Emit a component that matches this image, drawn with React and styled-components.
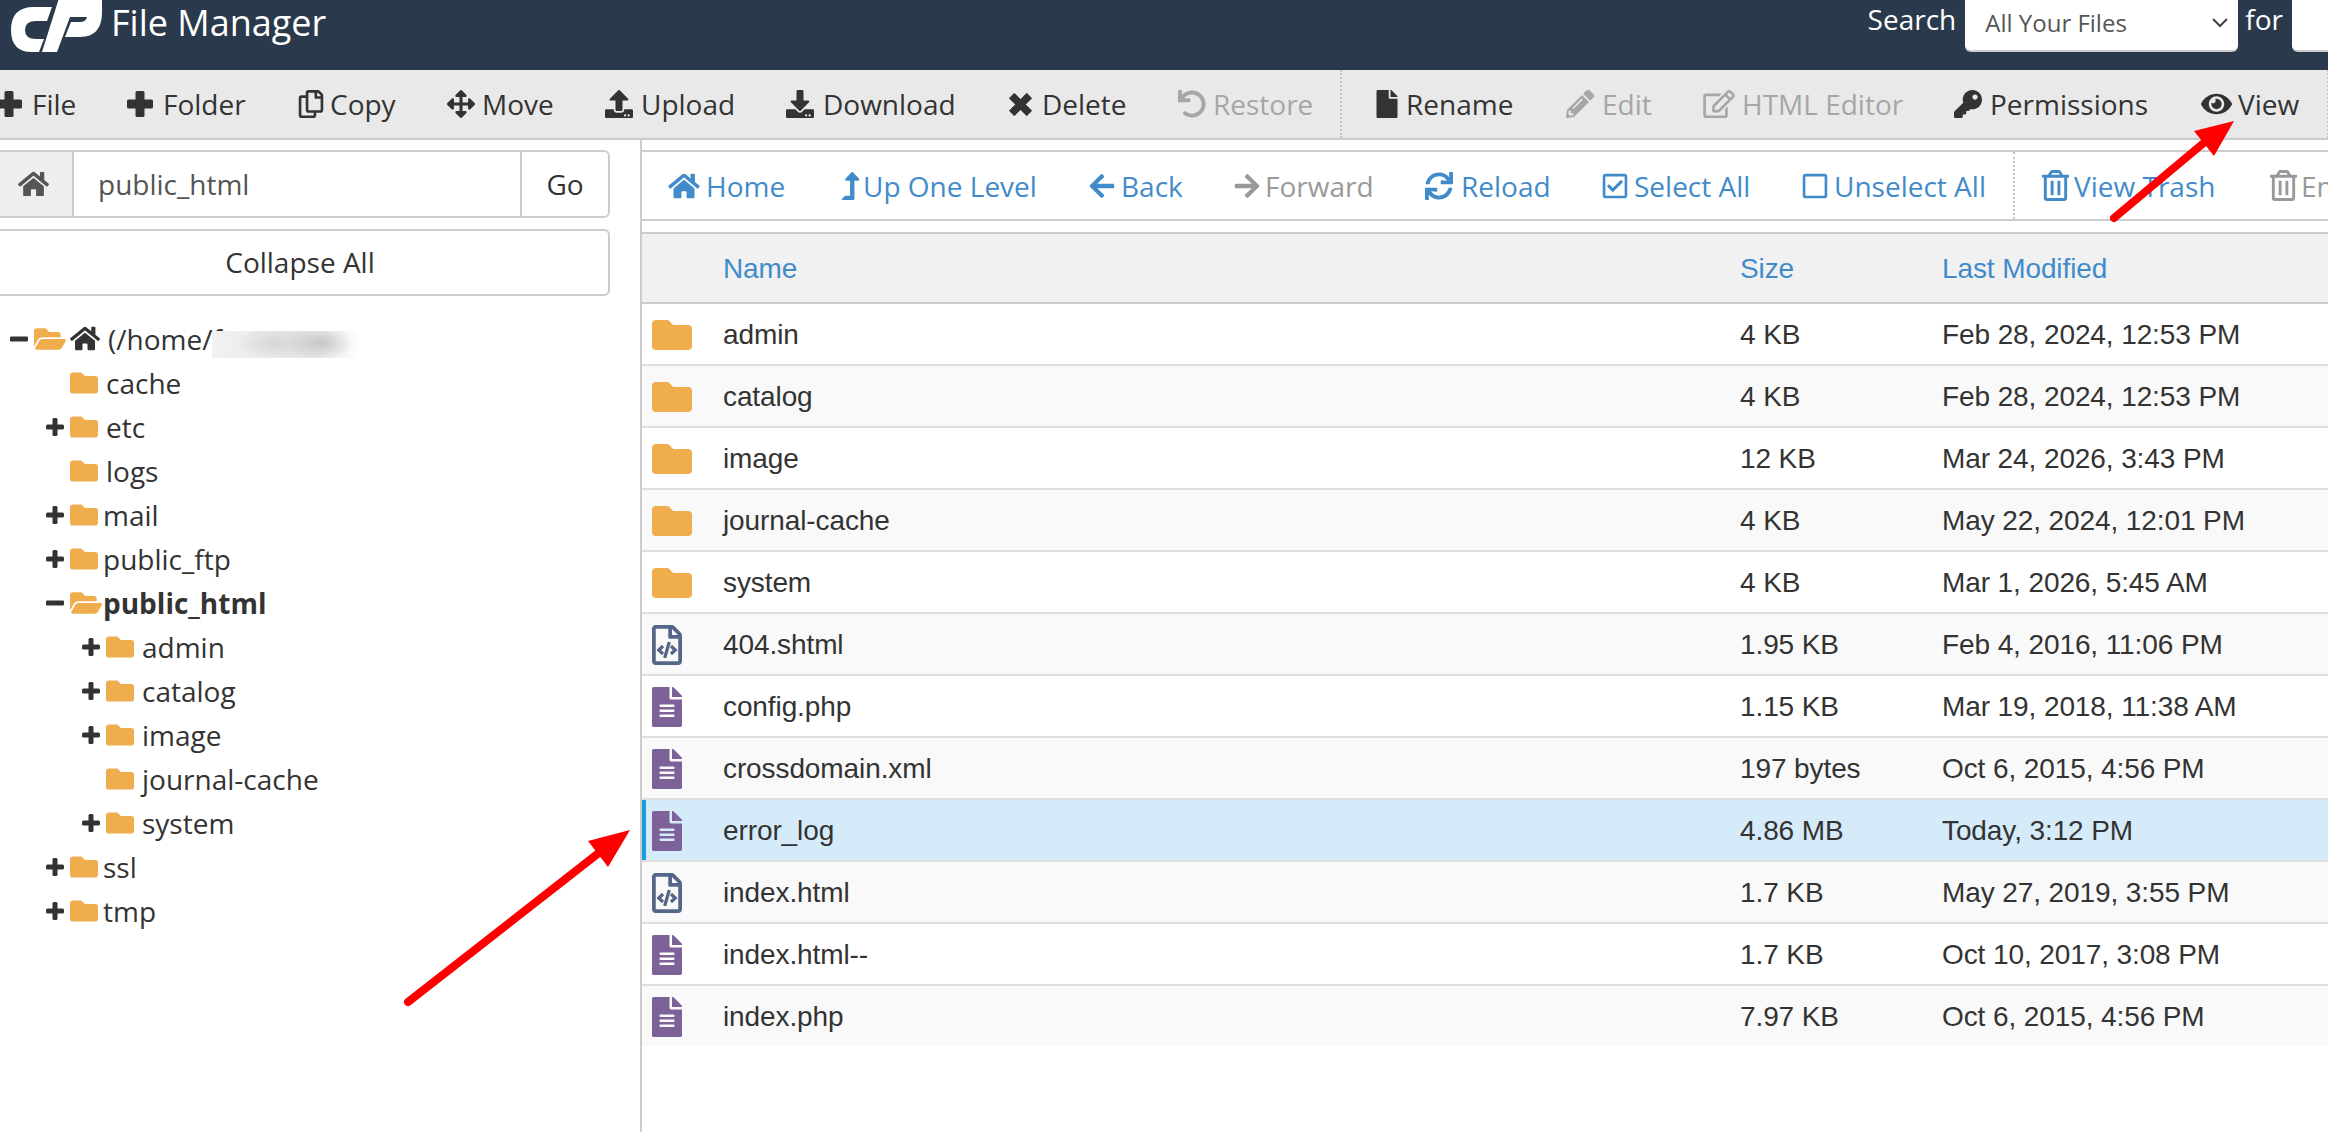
import React from "react";
import styled, { createGlobalStyle } from "styled-components";
import {
  FaRegCopy,
  FaArrowsAlt,
  FaUpload,
  FaDownload,
  FaUndo,
  FaFile,
  FaPencilAlt,
  FaRegEdit,
  FaKey,
  FaEye,
  FaHome,
  FaLevelUpAlt,
  FaArrowLeft,
  FaArrowRight,
  FaSync,
  FaRegCheckSquare,
  FaRegSquare,
  FaRegTrashAlt,
  FaFolder,
  FaFolderOpen,
  FaFileAlt,
  FaRegFileCode,
} from "react-icons/fa";

const GlobalStyle = createGlobalStyle`
  html, body {
    margin: 0;
    padding: 0;
    background: #fff;
    overflow: hidden;
  }
  body {
    font-family: "Open Sans", "Liberation Sans", sans-serif;
    font-size: 28px;
    color: #333;
  }
  * { box-sizing: border-box; }
`;

const Page = styled.div`
  position: relative;
  width: 2328px;
  height: 1132px;
  overflow: hidden;
`;

/* ---------- top bar ---------- */
const TopBar = styled.header`
  height: 70px;
  background: #2a3a4c;
  display: flex;
  justify-content: space-between;
  color: #fff;
`;

const Brand = styled.div`
  display: flex;
  align-items: flex-start;
`;

const Logo = styled.svg`
  width: 111px;
  height: 70px;
  flex: none;
`;

const BrandTitle = styled.span`
  font-size: 36px;
  line-height: 46px;
`;

const SearchArea = styled.div`
  display: flex;
  align-items: flex-start;
`;

const SearchLabel = styled.span`
  line-height: 38px;
  margin-right: 9px;
`;

const ForLabel = styled(SearchLabel)`
  margin: 0 9px 0 7px;
`;

const SearchSelect = styled.div`
  width: 273px;
  height: 52px;
  background: #fff;
  border-bottom: 2px solid #ccc;
  border-radius: 0 0 6px 6px;
  color: #555;
  font-size: 24px;
  line-height: 44px;
  padding: 0 10px 4px 20px;
  display: flex;
  align-items: center;
  justify-content: space-between;
`;

const SearchInput = styled.div`
  width: 36px;
  height: 52px;
  background: #fff;
  border-bottom: 2px solid #ccc;
  border-radius: 0 0 0 6px;
`;

/* ---------- main toolbar ---------- */
const MainToolbar = styled.nav`
  height: 70px;
  background: #e9e9e9;
  border-bottom: 2px solid #c8ccce;
  display: flex;
  align-items: stretch;
  white-space: nowrap;
`;

const ToolItem = styled.div`
  display: flex;
  align-items: center;
  flex: none;
  width: ${(p) => p.$w}px;
  color: ${(p) => (p.$off ? p.$offColor : "inherit")};
`;

const ToolIcon = styled.span`
  display: flex;
  flex: none;
  width: ${(p) => p.$w}px;
  margin-left: ${(p) => p.$ml || 0}px;
  font-size: ${(p) => p.$size || 28}px;
  svg {
    display: block;
    ${(p) => (p.$svgW ? `width: ${p.$svgW}px;` : "")}
  }
`;

const ToolDivider = styled.div`
  flex: none;
  width: 0;
  border-left: 2px dotted #c6c6c6;
  margin-right: ${(p) => p.$mr}px;
`;

/* ---------- body ---------- */
const Content = styled.div`
  display: flex;
  align-items: flex-start;
  height: 992px;
`;

const Sidebar = styled.aside`
  flex: none;
  width: 640px;
  padding-top: 10px;
  height: 100%;
`;

const PathBar = styled.div`
  margin-left: -10px;
  width: 620px;
  height: 68px;
  display: flex;
  border: 2px solid #ccc;
  border-radius: 6px;
  overflow: hidden;
`;

const PathHome = styled.div`
  width: 82px;
  flex: none;
  padding-left: 2px;
  background: #eee;
  border-right: 2px solid #ccc;
  display: flex;
  align-items: center;
  justify-content: center;
  color: #555;
  svg {
    width: 31px;
    height: 28px;
  }
`;

const PathValue = styled.div`
  flex: 1;
  padding-left: 24px;
  display: flex;
  align-items: center;
  color: #555;
`;

const PathGo = styled.div`
  width: 88px;
  flex: none;
  border-left: 2px solid #ccc;
  display: flex;
  align-items: center;
  justify-content: center;
`;

const CollapseButton = styled.div`
  margin: 11px 0 0 -10px;
  width: 620px;
  height: 67px;
  border: 2px solid #ccc;
  border-radius: 6px;
  display: flex;
  align-items: center;
  justify-content: center;
  padding-bottom: 2px;
`;

const Tree = styled.ul`
  list-style: none;
  margin: 20.5px 0 0;
  padding: 0;
`;

const TreeRow = styled.li`
  position: relative;
  height: 44px;
  display: flex;
  align-items: center;
  padding-left: ${(p) => 10 + p.$level * 36}px;
  font-weight: ${(p) => (p.$bold ? 700 : 400)};
`;

const Toggle = styled.span`
  width: 24px;
  flex: none;
  display: flex;
`;

const FolderSlot = styled.span`
  width: ${(p) => (p.$open ? 32 : 28)}px;
  flex: none;
  display: flex;
  color: #f0ad4e;
  font-size: ${(p) => (p.$open ? 32 : 28)}px;
`;

const HomeSlot = styled.span`
  display: flex;
  margin: 0 8px 0 4px;
  svg {
    width: 30px;
    height: 27px;
  }
`;

const TreeLabel = styled.span`
  margin-left: ${(p) => p.$gap}px;
`;

const BlurMask = styled.div`
  position: absolute;
  left: 212px;
  top: 14px;
  width: 146px;
  height: 27px;
  background: radial-gradient(ellipse 34px 18px at 108px 12px, #c6c6c6, transparent),
    radial-gradient(ellipse 40px 16px at 64px 12px, #d6d6d6, transparent),
    linear-gradient(90deg, #f2f2f2, #e6e6e6 60%, #fdfdfd);
`;

const Main = styled.section`
  flex: 1;
  min-width: 0;
  height: 100%;
  border-left: 2px solid #ccc;
  padding-top: 10px;
  overflow: hidden;
`;

const SubToolbar = styled.nav`
  height: 71px;
  border-top: 2px solid #ccc;
  border-bottom: 2px solid #ccc;
  display: flex;
  align-items: stretch;
  white-space: nowrap;
  color: #428bca;
  padding-left: 26px;
`;

const Table = styled.div`
  margin-top: 11px;
  font-family: "Liberation Sans", Arial, sans-serif;
  letter-spacing: -0.1px;
  color: #333;
`;

const Row = styled.div`
  display: grid;
  grid-template-columns: 81px 1017px 202px 1fr;
  align-items: center;
  height: 62px;
  padding-top: 1px;
  border-bottom: 2px solid #ddd;
  background: ${(p) => (p.$selected ? "#d6ebf9" : p.$odd ? "#f9f9f9" : "#fff")};
  position: relative;
`;

const HeadRow = styled(Row)`
  height: 72px;
  background: #f1f1f1;
  border-top: 2px solid #ccc;
  border-bottom: 2px solid #ccc;
  color: #428bca;
`;

const LastRow = styled(Row)`
  height: 60px;
  border-bottom: 0;
`;

const SelectBar = styled.span`
  position: absolute;
  left: 0;
  top: 0;
  bottom: 0;
  width: 4px;
  background: #1a9fdc;
`;

const RowIcon = styled.span`
  display: flex;
  padding-left: ${(p) => p.$pad}px;
  font-size: 40px;
  color: ${(p) => p.$color};
`;

const Arrow = styled.svg`
  position: absolute;
  left: 0;
  top: 0;
  width: 2328px;
  height: 1132px;
  pointer-events: none;
`;

/* FA4 plus / minus / times are chunkier than the ones in react-icons */
const PlusIcon = ({ s = 26, t = 9 }) => (
  <svg width={s} height={s} viewBox={`0 0 ${s} ${s}`} fill="currentColor">
    <rect x={(s - t) / 2} y="0" width={t} height={s} rx="1.5" />
    <rect x="0" y={(s - t) / 2} width={s} height={t} rx="1.5" />
  </svg>
);

const MinusIcon = ({ s = 18, t = 5 }) => (
  <svg width={s} height={s} viewBox={`0 0 ${s} ${s}`} fill="currentColor">
    <rect x="0" y={(s - t) / 2} width={s} height={t} rx="1" />
  </svg>
);

const TimesIcon = () => (
  <svg width="25" height="25" viewBox="0 0 24 24" fill="currentColor" stroke="currentColor" strokeLinejoin="round">
    <path d="M6 1.5 L12 7.5 L18 1.5 L22.5 6 L16.5 12 L22.5 18 L18 22.5 L12 16.5 L6 22.5 L1.5 18 L7.5 12 L1.5 6 Z" />
  </svg>
);

/* ---------- data ---------- */
const mainTools = [
  { icon: <PlusIcon />, iw: 36, ml: -4, text: "File", w: 127 },
  { icon: <PlusIcon />, iw: 36, text: "Folder", w: 170 },
  { icon: <FaRegCopy />, iw: 33, text: "Copy", w: 150 },
  { icon: <FaArrowsAlt />, iw: 35, text: "Move", w: 158 },
  { icon: <FaUpload />, iw: 36, text: "Upload", w: 181 },
  { icon: <FaDownload />, iw: 37, text: "Download", w: 222 },
  { icon: <TimesIcon />, iw: 34, text: "Delete", w: 170 },
  { icon: <FaUndo />, iw: 35, text: "Restore", w: 162, off: true },
  { divider: 31 },
  { icon: <FaFile />, iw: 33, text: "Rename", w: 193 },
  { icon: <FaPencilAlt />, iw: 36, text: "Edit", w: 137, off: true },
  { icon: <FaRegEdit />, svgW: 32, iw: 39, text: "HTML Editor", w: 251, off: true },
  { icon: <FaKey />, iw: 36, text: "Permissions", w: 247 },
  { icon: <FaEye />, svgW: 31, iw: 37, text: "View", w: 126 },
  { divider: 0 },
];

const subTools = [
  { icon: <FaHome />, svgW: 32, iw: 38, text: "Home", w: 170 },
  { icon: <FaLevelUpAlt />, iw: 25, text: "Up One Level", w: 250 },
  { icon: <FaArrowLeft />, iw: 33, text: "Back", w: 145 },
  { icon: <FaArrowRight />, iw: 32, text: "Forward", w: 192, off: true },
  { icon: <FaSync />, iw: 36, text: "Reload", w: 178 },
  { icon: <FaRegCheckSquare />, ml: -2, iw: 33, text: "Select All", w: 200 },
  { icon: <FaRegSquare />, ml: -2, iw: 33, text: "Unselect All", w: 210 },
  { divider: 25 },
  { icon: <FaRegTrashAlt />, size: 31, iw: 34, text: "View Trash", w: 230 },
  { icon: <FaRegTrashAlt />, size: 31, ml: -2, iw: 33, text: "Empty Trash", w: 200, off: true },
];

const treeRows = [
  { level: 1, name: "cache", gap: 8 },
  { level: 1, name: "etc", toggle: "plus", gap: 8 },
  { level: 1, name: "logs", gap: 8 },
  { level: 1, name: "mail", toggle: "plus", gap: 5 },
  { level: 1, name: "public_ftp", toggle: "plus", gap: 5 },
  { level: 1, name: "public_html", toggle: "minus", open: true, bold: true, gap: 1 },
  { level: 2, name: "admin", toggle: "plus", gap: 8 },
  { level: 2, name: "catalog", toggle: "plus", gap: 8 },
  { level: 2, name: "image", toggle: "plus", gap: 8 },
  { level: 2, name: "journal-cache", gap: 8 },
  { level: 2, name: "system", toggle: "plus", gap: 8 },
  { level: 1, name: "ssl", toggle: "plus", gap: 5 },
  { level: 1, name: "tmp", toggle: "plus", gap: 5 },
];

const files = [
  { name: "admin", size: "4 KB", date: "Feb 28, 2024, 12:53 PM", type: "folder" },
  { name: "catalog", size: "4 KB", date: "Feb 28, 2024, 12:53 PM", type: "folder" },
  { name: "image", size: "12 KB", date: "Mar 24, 2026, 3:43 PM", type: "folder" },
  { name: "journal-cache", size: "4 KB", date: "May 22, 2024, 12:01 PM", type: "folder" },
  { name: "system", size: "4 KB", date: "Mar 1, 2026, 5:45 AM", type: "folder" },
  { name: "404.shtml", size: "1.95 KB", date: "Feb 4, 2016, 11:06 PM", type: "code" },
  { name: "config.php", size: "1.15 KB", date: "Mar 19, 2018, 11:38 AM", type: "text" },
  { name: "crossdomain.xml", size: "197 bytes", date: "Oct 6, 2015, 4:56 PM", type: "text" },
  { name: "error_log", size: "4.86 MB", date: "Today, 3:12 PM", type: "text", selected: true },
  { name: "index.html", size: "1.7 KB", date: "May 27, 2019, 3:55 PM", type: "code" },
  { name: "index.html--", size: "1.7 KB", date: "Oct 10, 2017, 3:08 PM", type: "text" },
  { name: "index.php", size: "7.97 KB", date: "Oct 6, 2015, 4:56 PM", type: "text" },
];

function ToolRow({ items, offColor }) {
  return items.map((t, i) =>
    t.divider !== undefined ? (
      <ToolDivider key={i} $mr={t.divider} />
    ) : (
      <ToolItem key={i} $w={t.w} $off={t.off} $offColor={offColor}>
        <ToolIcon $w={t.iw} $ml={t.ml} $size={t.size} $svgW={t.svgW}>
          {t.icon}
        </ToolIcon>
        {t.text}
      </ToolItem>
    )
  );
}

function FileIcon({ type }) {
  if (type === "folder")
    return (
      <RowIcon $color="#f0ad4e" $pad={10}>
        <FaFolder />
      </RowIcon>
    );
  if (type === "code")
    return (
      <RowIcon $color="#556688" $pad={5}>
        <FaRegFileCode />
      </RowIcon>
    );
  return (
    <RowIcon $color="#7d6299" $pad={5}>
      <FaFileAlt />
    </RowIcon>
  );
}

export default function App() {
  return (
    <Page>
      <GlobalStyle />
      <TopBar>
        <Brand>
          <Logo viewBox="0 0 111 70">
            <path
              fill="#fff"
              d="M52 7 L47 21 L36 21 Q25 21 25 30 Q25 39 36 39 L44 39 L39 52 L32 52 Q11 52 11 30 Q11 7 34 7 Z"
            />
            <path
              fill="#fff"
              d="M60 -5 L102 -5 L102 12 Q102 37 80 37 L65 37 L71 22 L80 22 Q86 22 87 17 L70 17 L57 52 L42 52 Z"
            />
          </Logo>
          <BrandTitle>File Manager</BrandTitle>
        </Brand>
        <SearchArea>
          <SearchLabel>Search</SearchLabel>
          <SearchSelect>
            All Your Files
            <svg width="16" height="10" viewBox="0 0 16 10">
              <path d="M1 1 L8 8 L15 1" fill="none" stroke="#444" strokeWidth="2" />
            </svg>
          </SearchSelect>
          <ForLabel>for</ForLabel>
          <SearchInput />
        </SearchArea>
      </TopBar>

      <MainToolbar>
        <ToolRow items={mainTools} offColor="#a6a6a6" />
      </MainToolbar>

      <Content>
        <Sidebar>
          <PathBar>
            <PathHome>
              <FaHome />
            </PathHome>
            <PathValue>public_html</PathValue>
            <PathGo>Go</PathGo>
          </PathBar>
          <CollapseButton>Collapse All</CollapseButton>
          <Tree>
            <TreeRow $level={0}>
              <Toggle>
                <MinusIcon />
              </Toggle>
              <FolderSlot $open>
                <FaFolderOpen />
              </FolderSlot>
              <HomeSlot>
                <FaHome />
              </HomeSlot>
              (/home/f
              <BlurMask />
            </TreeRow>
            {treeRows.map((r) => (
              <TreeRow key={r.name} $level={r.level} $bold={r.bold}>
                <Toggle>
                  {r.toggle === "plus" && <PlusIcon s={18} t={5} />}
                  {r.toggle === "minus" && <MinusIcon />}
                </Toggle>
                <FolderSlot $open={r.open}>{r.open ? <FaFolderOpen /> : <FaFolder />}</FolderSlot>
                <TreeLabel $gap={r.gap}>{r.name}</TreeLabel>
              </TreeRow>
            ))}
          </Tree>
        </Sidebar>

        <Main>
          <SubToolbar>
            <ToolRow items={subTools} offColor="#999" />
          </SubToolbar>
          <Table>
            <HeadRow>
              <span />
              <span>Name</span>
              <span>Size</span>
              <span>Last Modified</span>
            </HeadRow>
            {files.map((f, i) => {
              const R = i === files.length - 1 ? LastRow : Row;
              return (
                <R key={f.name} $odd={i % 2 === 1} $selected={f.selected}>
                  {f.selected && <SelectBar />}
                  <FileIcon type={f.type} />
                  <span>{f.name}</span>
                  <span>{f.size}</span>
                  <span>{f.date}</span>
                </R>
              );
            })}
          </Table>
        </Main>
      </Content>

      <Arrow viewBox="0 0 2328 1132">
        <line x1="2114" y1="218" x2="2206" y2="141" stroke="#fe0000" strokeWidth="8" strokeLinecap="round" />
        <polygon points="2234,121 2194,131 2214,156" fill="#fe0000" />
        <line x1="408" y1="1002" x2="600" y2="852" stroke="#fe0000" strokeWidth="8" strokeLinecap="round" />
        <polygon points="630,830 588,841 608,867" fill="#fe0000" />
      </Arrow>
    </Page>
  );
}
